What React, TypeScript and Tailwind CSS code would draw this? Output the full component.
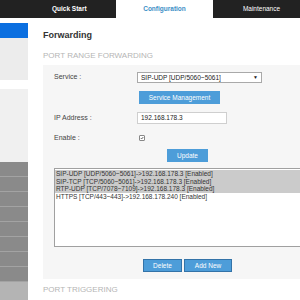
import React from "react";

const rules = [
  { text: "SIP-UDP [UDP/5060~5061]->192.168.178.3 [Enabled]", selected: true },
  { text: "SIP-TCP [TCP/5060~5061]->192.168.178.3 [Enabled]", selected: true },
  { text: "RTP-UDP [TCP/7078~7109]->192.168.178.3 [Enabled]", selected: true },
  { text: "HTTPS [TCP/443~443]->192.168.178.240 [Enabled]", selected: false },
];

export default function App() {
  return (
    <div className="w-[300px] h-[300px] overflow-hidden bg-white font-['Liberation_Sans',Arial,sans-serif] text-[#333]">
      {/* Top tabs */}
      <div className="flex h-[18px] w-[400px]">
        <div className="w-[116px] bg-[#222] text-white text-[6.5px] font-bold flex items-center pl-[52px]">
          Quick Start
        </div>
        <div className="w-[97px] bg-white text-[#3b8fc6] text-[6.5px] font-bold flex items-center justify-center">
          Configuration
        </div>
        <div className="w-[97px] bg-[#222] text-white text-[6.5px] flex items-center justify-center">
          Maintenance
        </div>
      </div>

      <div className="flex">
        {/* Sidebar */}
        <div className="w-[28px] shrink-0 flex flex-col">
          <div className="mt-[5px] h-[15px] bg-[#0b6fe0]" />
          <div className="h-[42px] bg-[#ececec]" />
          <div className="h-[9px]" />
          <div className="h-[73px] bg-[#f0f0f0]" />
          {Array.from({ length: 8 }).map((_, i) => (
            <div key={i} className="h-[15px] bg-[#8a8a8a] border-b border-[#a3a3a3]" />
          ))}
          <div className="h-[20px] bg-[#b4b4b4]" />
        </div>

        {/* Main */}
        <div className="ml-[15px] w-[289px] shrink-0">
          <div className="pt-[11px] text-[9px] leading-[12px] font-bold text-[#333]">Forwarding</div>
          <div className="mt-[10px] text-[8px] leading-[10px] text-[#b5b5b5]">PORT RANGE FORWARDING</div>

          <div className="mt-[4px] bg-[#f6f6f6] pt-[7px] pb-[7px] pl-[11px] pr-[11px] text-[7px] text-[#444]">
            <div className="flex items-center h-[11px]">
              <div className="w-[83px]">Service :</div>
              <div className="w-[125px] h-[11px] bg-white border border-[#a9a9a9] flex items-center justify-between pl-[3px] pr-[3px] text-[6.5px] text-[#222]">
                <span>SIP-UDP [UDP/5060~5061]</span>
                <span className="text-[5px]">▼</span>
              </div>
            </div>
            <div className="mt-[8px] pl-[85px]">
              <div className="w-[81px] h-[13px] bg-[#4d9dd9] text-white text-[6.5px] flex items-center justify-center">
                Service Management
              </div>
            </div>
            <div className="mt-[8px] flex items-center h-[12px]">
              <div className="w-[83px]">IP Address :</div>
              <div className="w-[90px] h-[12px] bg-white border border-[#cfcfcf] flex items-center pl-[3px] text-[6.5px] text-[#222]">
                192.168.178.3
              </div>
            </div>
            <div className="mt-[9px] flex items-center h-[10px]">
              <div className="w-[85px]">Enable :</div>
              <div className="w-[6px] h-[6px] bg-white border border-[#888] rounded-[1px] flex items-center justify-center">
                <svg viewBox="0 0 10 10" className="w-[6px] h-[6px]">
                  <path d="M2 5.2 L4.2 7.4 L8.2 2.6" fill="none" stroke="#333" strokeWidth="1.8" />
                </svg>
              </div>
            </div>
            <div className="mt-[6px] flex justify-center">
              <div className="w-[41px] h-[13px] bg-[#4d9dd9] text-white text-[6.5px] flex items-center justify-center">
                Update
              </div>
            </div>
            <div className="mt-[6px] h-[79px] bg-white border border-[#a0a0a0] pt-[1px] text-[6.5px] leading-[7.7px] text-[#333]">
              {rules.map((r) => (
                <div key={r.text} className={`pl-[1px] whitespace-nowrap ${r.selected ? "bg-[#cbcbcb]" : ""}`}>
                  {r.text}
                </div>
              ))}
            </div>
            <div className="mt-[12px] flex justify-center gap-[2px]">
              <div className="w-[39px] h-[13px] bg-[#4d9dd9] border border-[#3373a8] text-white text-[6.5px] flex items-center justify-center">
                Delete
              </div>
              <div className="w-[48px] h-[13px] bg-[#4d9dd9] border border-[#3373a8] text-white text-[6.5px] flex items-center justify-center">
                Add New
              </div>
            </div>
          </div>

          <div className="mt-[6px] text-[8px] leading-[10px] text-[#b5b5b5]">PORT TRIGGERING</div>
        </div>
      </div>
    </div>
  );
}
